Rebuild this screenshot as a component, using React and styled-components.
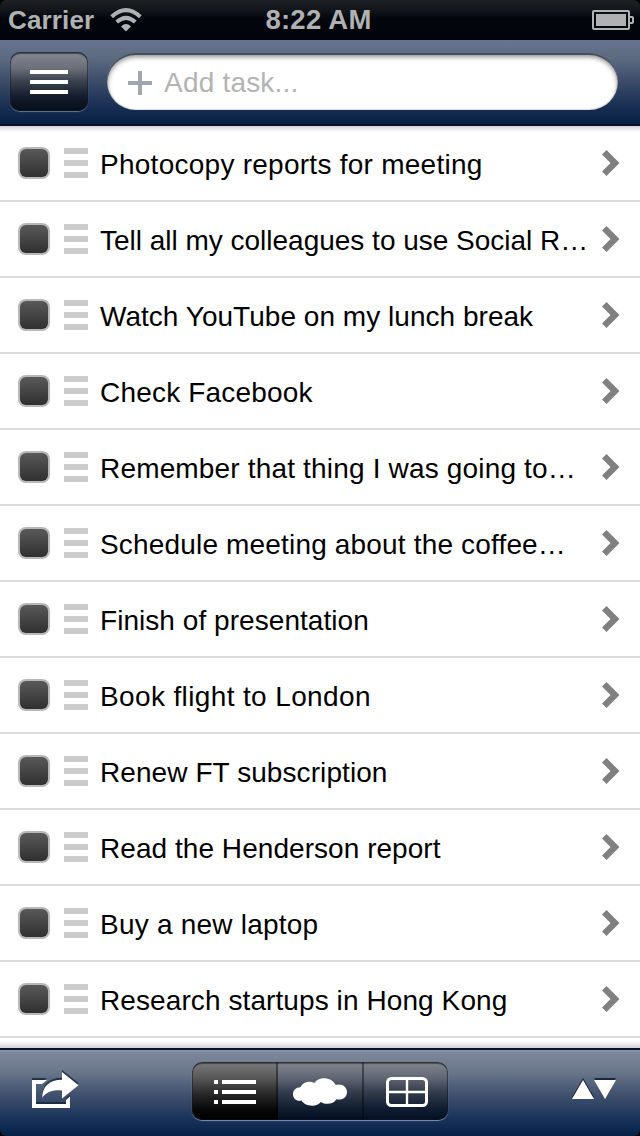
import React from 'react';
import styled, { createGlobalStyle } from 'styled-components';

const GlobalStyle = createGlobalStyle`
  * { box-sizing: border-box; }
  body { margin: 0; background: #000; }
  svg { display: block; flex: none; }
  button { padding: 0; border: 0; }
`;

const Screen = styled.div`
  width: 640px;
  height: 1136px;
  display: flex;
  flex-direction: column;
  overflow: hidden;
  border-radius: 6px;
  font-family: 'Liberation Sans', Arial, sans-serif;
`;

const StatusBar = styled.header`
  height: 40px;
  flex: none;
  display: grid;
  grid-template-columns: 1fr auto 1fr;
  align-items: center;
  padding: 0 6px 0 8px;
  background: linear-gradient(#1d2124 0, #12161a 10px, #03060d 19px, #01040a 100%);
  color: #b0b1b3;
  font-size: 26px;
  font-weight: bold;
  line-height: 40px;
`;

const Carrier = styled.div`
  display: flex;
  align-items: center;
  gap: 16px;
`;

const StatusText = styled.span`
  letter-spacing: ${p => p.$spacing || 0}px;
  white-space: nowrap;
`;

const Clock = styled(StatusText)`
  margin-right: 5px;
  font-size: 27.5px;
`;

const BatterySlot = styled.div`
  justify-self: end;
`;

const TopBar = styled.div`
  height: 86px;
  flex: none;
  display: flex;
  align-items: flex-start;
  gap: 19px;
  padding: 12px 22px 0 10px;
  border-bottom: 2px solid #04122f;
  background: linear-gradient(#68758e 0, #5a6880 20px, #3b4b68 42px, #1a3055 65px, #072043 84px);
`;

const MenuButton = styled.button`
  width: 78px;
  height: 59px;
  display: flex;
  align-items: center;
  justify-content: center;
  border-radius: 10px;
  background: linear-gradient(#858892 0, #6a6f7a 16px, #3b424f 29px, #151e2e 44px, #050c1b 100%);
  box-shadow: inset 0 0 0 1px rgba(20, 24, 32, 0.5), inset 0 2px 1px rgba(20, 24, 32, 0.55), 0 1px 1px rgba(145, 160, 185, 0.65);
`;

const TaskField = styled.label`
  flex: 1;
  height: 57px;
  margin-top: 1px;
  display: flex;
  align-items: center;
  gap: 12px;
  padding: 2px 21px 0;
  border-radius: 29px;
  background: #fff;
  box-shadow: inset 0 2px 0 #45505f, inset 0 4px 5px rgba(0, 0, 0, 0.45), inset 0 0 2px rgba(0, 0, 0, 0.4);
  color: #b3b3b3;
  font-size: 28px;
`;

const Placeholder = styled.span`
  letter-spacing: ${p => p.$spacing}px;
  line-height: 32px;
`;

const TaskList = styled.main`
  height: 922px;
  flex: none;
  overflow: hidden;
  background: linear-gradient(#d6d1d9 0, #fff 6px, #fff calc(100% - 7px), #d2d0d4 100%);
`;

const TaskRow = styled.div`
  height: 76px;
  display: flex;
  align-items: center;
  padding: 0 20px 0 18px;
  border-bottom: 2px solid #dcdcdc;
`;

const Checkbox = styled.span`
  width: 32px;
  height: 32px;
  flex: none;
  padding: 2px;
  border-radius: 8px;
  background: #b8b8b8;
  &::before {
    content: '';
    display: block;
    height: 28px;
    border-radius: 6px;
    background: linear-gradient(#595959, #303030);
  }
`;

const DragHandle = styled.span`
  width: 24px;
  height: 30px;
  flex: none;
  margin: 0 12px 0 14px;
  background: linear-gradient(#ccc 6px, #fff 6px, #fff 12px, #ccc 12px, #ccc 18px, #fff 18px, #fff 24px, #ccc 24px);
`;

const TaskTitle = styled.span`
  flex: 1;
  padding-top: 4px;
  color: #000;
  font-size: 28px;
  line-height: 32px;
  white-space: nowrap;
  letter-spacing: ${p => p.$spacing}px;
`;

const BottomBar = styled.footer`
  height: 88px;
  flex: none;
  display: grid;
  grid-template-columns: 1fr 256px 1fr;
  align-items: start;
  padding: 12px 24px 0;
  border-top: 2px solid #04122f;
  background: linear-gradient(#9099aa 0, #7e889b 2px, #69768b 22px, #42526e 44px, #19325a 69px, #072046 86px);
`;

const BarAction = styled.button`
  background: none;
  justify-self: ${p => p.$align};
  margin: ${p => p.$top}px 0 0 ${p => p.$left || 0}px;
`;

const Segments = styled.div`
  width: 256px;
  height: 58px;
  display: grid;
  grid-template-columns: 86px 86px 84px;
  overflow: hidden;
  border-radius: 10px;
  position: relative;
  box-shadow: 0 1px 1px rgba(155, 170, 195, 0.8);
  &::after {
    content: '';
    position: absolute;
    inset: 0;
    border-radius: 10px;
    box-shadow: inset 0 0 0 1px rgba(20, 22, 28, 0.5), inset 0 2px 1px rgba(20, 22, 28, 0.5);
  }
`;

const Segment = styled.button`
  display: flex;
  align-items: center;
  justify-content: center;
  padding-top: 2px;
  padding-left: ${p => p.$shift || 0}px;
  border-right: ${p => (p.$last ? '0' : '2px solid rgba(0, 0, 0, 0.4)')};
  background: ${p => p.$active
    ? 'linear-gradient(#7c7c7c 0, #575757 16px, #282828 32px, #080808 47px, #000 100%)'
    : 'linear-gradient(#838791 0, #5f6673 16px, #303a4a 31px, #111e31 46px, #030e21 100%)'};
`;

const tasks = [
  { title: 'Photocopy reports for meeting', spacing: 0.26 },
  { title: 'Tell all my colleagues to use Social R…', spacing: -0.01 },
  { title: 'Watch YouTube on my lunch break', spacing: 0.03 },
  { title: 'Check Facebook', spacing: 0.19 },
  { title: 'Remember that thing I was going to…', spacing: 0.17 },
  { title: 'Schedule meeting about the coffee…', spacing: 0.17 },
  { title: 'Finish of presentation', spacing: 0.05 },
  { title: 'Book flight to London', spacing: 0.37 },
  { title: 'Renew FT subscription', spacing: 0.08 },
  { title: 'Read the Henderson report', spacing: 0.05 },
  { title: 'Buy a new laptop', spacing: 0.22 },
  { title: 'Research startups in Hong Kong', spacing: 0.09 },
];

const WifiIcon = () => (
  <svg width="32" height="24" viewBox="0 0 32 24" fill="none" stroke="#b0b1b3">
    <path d="M1.7 8.8Q16-4.4 30.3 8.8" strokeWidth="4" />
    <path d="M6.7 14.1Q16 5.7 25.3 14.1" strokeWidth="4" />
    <path d="M11 18.4Q16 13.8 21 18.4L16 23.5Z" fill="#b0b1b3" stroke="none" />
  </svg>
);

const BatteryIcon = () => (
  <svg width="42" height="20" viewBox="0 0 42 20" fill="none" stroke="#b0b1b3" strokeWidth="2">
    <rect x="1" y="1" width="36" height="18" rx="1" />
    <rect x="4" y="4" width="30" height="12" fill="#b0b1b3" stroke="none" />
    <path d="M37 7h3q1 0 1 1v4q0 1-1 1h-3" />
  </svg>
);

const MenuIcon = () => (
  <svg width="38" height="24" viewBox="0 0 38 24" fill="#fff">
    <path d="M0 0h38v4H0zM0 10h38v4H0zM0 20h38v4H0z" />
  </svg>
);

const PlusIcon = () => (
  <svg width="24" height="24" viewBox="0 0 24 24" fill="#a0a5b0">
    <path d="M10 0h4v10h10v4H14v10h-4V14H0v-4h10z" />
  </svg>
);

const ChevronIcon = () => (
  <svg width="18" height="26" viewBox="0 0 18 26" fill="#808080">
    <path d="M0 4.5L4.5 0L17.5 13L4.5 26L0 21.5L8.5 13Z" />
  </svg>
);

const ShareShape = () => (
  <>
    <path d="M0 10H15L10 14H4V34H34V30L38 26.5V38H0Z" />
    <path d="M30 2L46.5 15.2L30 28.5V20.5C21 19.5 14 22 10.3 27.8C10 17 17 9.8 30 9.8Z" />
  </>
);

const ShareIcon = () => (
  <svg width="47" height="39" viewBox="0 0 47 39">
    <g fill="#19283e" opacity="0.85" transform="translate(0 -2)"><ShareShape /></g>
    <g fill="#fff"><ShareShape /></g>
  </svg>
);

const ListIcon = () => (
  <svg width="42" height="24" viewBox="0 0 42 24" fill="#fff">
    <path d="M0 0h4v4H0zM8 0h34v4H8zM0 10h4v4H0zM8 10h34v4H8zM0 20h4v4H0zM8 20h34v4H8z" />
  </svg>
);

const CloudIcon = () => (
  <svg width="54" height="28" viewBox="0 0 54 28" fill="#fff">
    <path d="M7.5 9.2C9.5 4.5 16 2.2 21.4 5C25-1.2 38-2.2 42.6 7C48.5 5 54 8.6 54 14.2C54 19.6 49 22.6 43.5 21.2C40.5 26.2 33 27.2 27.8 24C24.5 29.2 12.5 29.2 8.5 22.6C3.5 23.6 0 20.6 0 16C0 12.2 3.2 9 7.5 9.2Z" />
  </svg>
);

const GridIcon = () => (
  <svg width="42" height="30" viewBox="0 0 42 30" fill="none" stroke="#fff">
    <rect x="1.5" y="1.5" width="39" height="27" rx="4" strokeWidth="3" />
    <path d="M21 2V28M2 15H40" strokeWidth="2.4" />
  </svg>
);

const SortIcon = () => (
  <svg width="44" height="22" viewBox="0 0 44 22">
    <path d="M0 19L11 0L22 19ZM22 0H44L33 19Z" fill="#19283e" />
    <path d="M0 21L11 2L22 21ZM22 2H44L33 21Z" fill="#fff" />
  </svg>
);

export default function App() {
  return (
    <>
      <GlobalStyle />
      <Screen>
        <StatusBar>
          <Carrier>
            <StatusText $spacing={0.15}>Carrier</StatusText>
            <WifiIcon />
          </Carrier>
          <Clock $spacing={0.25}>8:22 AM</Clock>
          <BatterySlot><BatteryIcon /></BatterySlot>
        </StatusBar>
        <TopBar>
          <MenuButton aria-label="Menu"><MenuIcon /></MenuButton>
          <TaskField>
            <PlusIcon />
            <Placeholder $spacing={0.2}>Add task...</Placeholder>
          </TaskField>
        </TopBar>
        <TaskList>
          {tasks.map(task => (
            <TaskRow key={task.title}>
              <Checkbox />
              <DragHandle />
              <TaskTitle $spacing={task.spacing}>{task.title}</TaskTitle>
              <ChevronIcon />
            </TaskRow>
          ))}
        </TaskList>
        <BottomBar>
          <BarAction $align="start" $top={8} $left={8} aria-label="Share"><ShareIcon /></BarAction>
          <Segments>
            <Segment $active $shift={2} aria-label="List"><ListIcon /></Segment>
            <Segment aria-label="Cloud"><CloudIcon /></Segment>
            <Segment $last $shift={2} aria-label="Grid"><GridIcon /></Segment>
          </Segments>
          <BarAction $align="end" $top={16} aria-label="Sort"><SortIcon /></BarAction>
        </BottomBar>
      </Screen>
    </>
  );
}
